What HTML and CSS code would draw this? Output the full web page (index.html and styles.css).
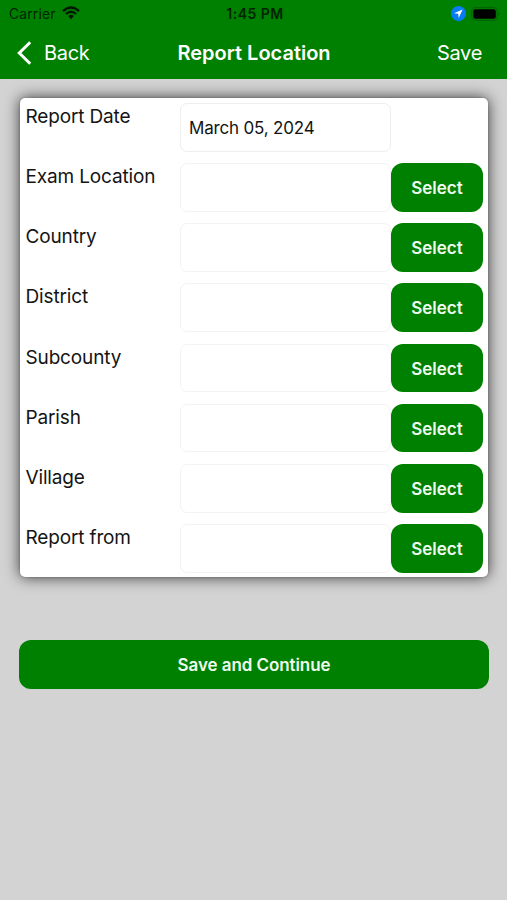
FILE: index.html
```html
<!DOCTYPE html>
<html lang="en">
<head>
<meta charset="utf-8">
<title>Report Location</title>
<link rel="stylesheet" href="styles.css">
</head>
<body>
<header class="header">
  <div class="status">
    <div class="carrier"><span>Carrier</span>
      <svg class="wifi" width="18" height="14" viewBox="0 0 18 14" fill="none" stroke="#001800" stroke-width="2.3"><path d="M1 5.1Q9-2.2 17 5.1M3.9 8Q9 3.5 14.1 8"/><path d="M6.1 10.1Q9 7.6 11.9 10.1L9 13.2Z" fill="#001800" stroke="none"/></svg>
    </div>
    <span class="time">1:45 PM</span>
    <div class="indicators">
      <svg width="15" height="15" viewBox="0 0 15 15"><circle cx="7.5" cy="7.5" r="7.5" fill="#087cf5"/><path d="M11.6 3.4L3 7.3L7.2 7.8L7.7 12Z" fill="#fff"/></svg>
      <svg width="30" height="14" viewBox="0 0 30 14"><rect x=".7" y=".7" width="25.6" height="12.6" rx="4" fill="none" stroke="#006500" stroke-width="1.2"/><rect x="2.3" y="2.3" width="22.5" height="9.4" rx="2.2" fill="#000"/><path d="M27.6 5Q29.6 7 27.6 9Z" fill="#005400"/></svg>
    </div>
  </div>
  <nav class="nav">
    <a class="back"><svg width="16" height="24" viewBox="0 0 16 24" fill="none" stroke="#fff" stroke-width="3"><path d="M14.2 1.3L3.3 12L14.2 22.7"/></svg><span>Back</span></a>
    <h1 class="title">Report Location</h1>
    <a class="save">Save</a>
  </nav>
</header>
<main class="main">
  <section class="card">
    <label class="label">Report Date</label><div class="field date">March 05, 2024</div><span></span>
    <label class="label">Exam Location</label><div class="field"></div><button class="button">Select</button>
    <label class="label">Country</label><div class="field"></div><button class="button">Select</button>
    <label class="label">District</label><div class="field"></div><button class="button">Select</button>
    <label class="label">Subcounty</label><div class="field"></div><button class="button">Select</button>
    <label class="label">Parish</label><div class="field"></div><button class="button">Select</button>
    <label class="label">Village</label><div class="field"></div><button class="button">Select</button>
    <label class="label">Report from</label><div class="field"></div><button class="button">Select</button>
  </section>
  <button class="button submit">Save and Continue</button>
</main>
</body>
</html>
```
FILE: styles.css
```css
* { box-sizing: border-box; }
body {
  margin: 0;
  min-height: 900px;
  background: #d3d3d3;
  color: #141414;
  font-family: Inter, "Liberation Sans", sans-serif;
}
.header { height: 79px; background: #008000; }
.status, .nav {
  display: grid;
  grid-template-columns: 1fr auto 1fr;
  align-items: center;
}
.status {
  height: 27px;
  padding: 0 6px 0 9px;
  color: #002400;
  font-size: 13.8px;
}
.carrier { display: flex; align-items: center; gap: 6px; letter-spacing: .2px; }
.wifi { margin-top: -2px; }
.time { font-weight: 600; font-size: 14px; letter-spacing: .5px; }
.indicators { display: flex; justify-content: flex-end; align-items: center; gap: 5px; }
.nav {
  height: 51px;
  padding: 0 25px 0 16px;
  color: #fff;
  font-size: 20px;
  letter-spacing: -.3px;
}
.back { display: flex; align-items: center; gap: 12px; }
.title { margin: 0 -5px 0 5px; font-size: 20px; font-weight: 600; letter-spacing: 0; }
.save { justify-self: end; }
.main { padding: 19px 19px 0 20px; }
.card {
  display: grid;
  grid-template-columns: 155px 211px 92px;
  grid-auto-rows: 48.7px;
  row-gap: 11.46px;
  height: 479px;
  padding: 5px;
  background: #fff;
  border-radius: 5px;
  box-shadow: 0 0 15px rgba(0, 0, 0, .75), 0 0 2px rgba(0, 0, 0, .3);
}
.label { padding-left: .5px; font-size: 19px; line-height: 28px; letter-spacing: -.15px; }
.field {
  padding-left: 8px;
  border: 1px solid #f3f3f3;
  border-radius: 7px;
  font-size: 17px;
  line-height: 48px;
}
.date { letter-spacing: -.18px; border-color: #eee; }
.button {
  padding: 1px 0 0;
  border: 0;
  border-radius: 12px;
  background: #008000;
  color: #eefbee;
  font: 600 17px/48px Inter, "Liberation Sans", sans-serif;
}
.submit { display: block; width: 470px; height: 49px; margin: 63px 0 0 -1px; letter-spacing: -.07px; }
```
